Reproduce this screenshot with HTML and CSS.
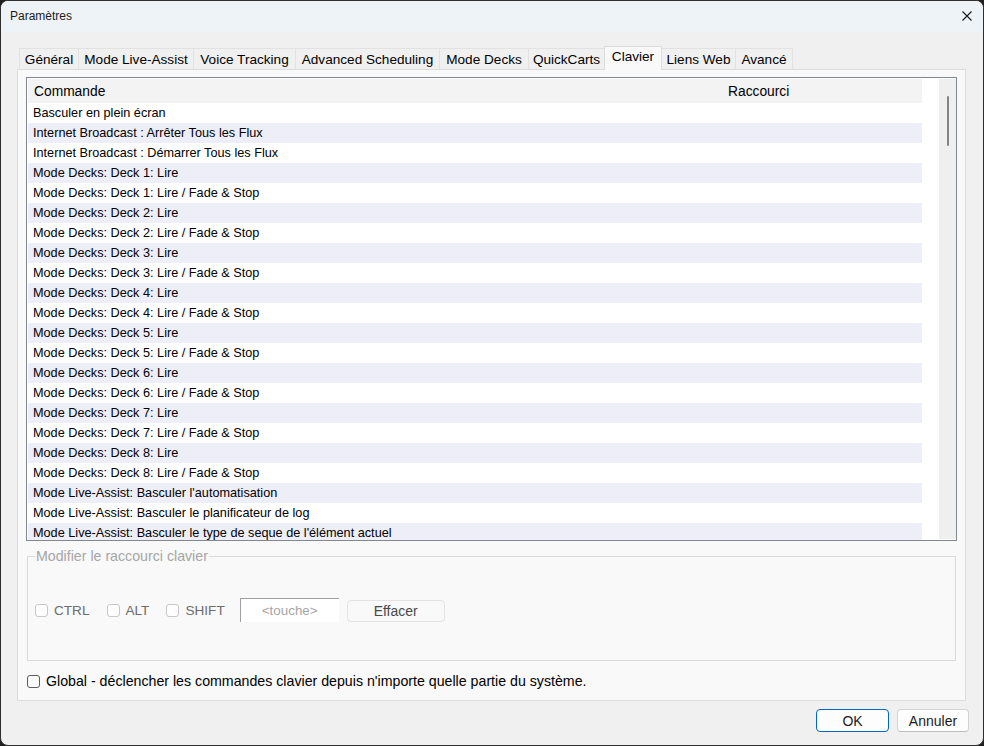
FILE: index.html
```html
<!DOCTYPE html>
<html lang="fr">

<head>
    <meta charset="UTF-8">
    <meta name="viewport" content="width=device-width, initial-scale=1.0">
    <title>Paramètres</title>
    <link rel="stylesheet" href="styles.css">
</head>

<body>
    <div class="window">
        <header class="titlebar">
            <span class="title">Paramètres</span>
            <svg class="close" width="10" height="10" viewBox="0 0 10 10">
                <path d="M0.5 0.5 L9.5 9.5 M9.5 0.5 L0.5 9.5" stroke="#1a1a1a" stroke-width="1.1" fill="none" />
            </svg>
        </header>

        <main class="content">
            <nav class="tabs">
                <div class="tab">Général</div>
                <div class="tab">Mode Live-Assist</div>
                <div class="tab">Voice Tracking</div>
                <div class="tab">Advanced Scheduling</div>
                <div class="tab">Mode Decks</div>
                <div class="tab">QuickCarts</div>
                <div class="tab active">Clavier</div>
                <div class="tab">Liens Web</div>
                <div class="tab">Avancé</div>
            </nav>

            <section class="panel">
                <div class="listbox">
                    <div class="list">
                        <div class="list-head">
                            <span class="col-cmd">Commande</span>
                            <span>Raccourci</span>
                        </div>
                        <div class="rows">
                            <div class="row">Basculer en plein écran</div>
                            <div class="row">Internet Broadcast : Arrêter Tous les Flux</div>
                            <div class="row">Internet Broadcast : Démarrer Tous les Flux</div>
                            <div class="row">Mode Decks: Deck 1: Lire</div>
                            <div class="row">Mode Decks: Deck 1: Lire / Fade &amp; Stop</div>
                            <div class="row">Mode Decks: Deck 2: Lire</div>
                            <div class="row">Mode Decks: Deck 2: Lire / Fade &amp; Stop</div>
                            <div class="row">Mode Decks: Deck 3: Lire</div>
                            <div class="row">Mode Decks: Deck 3: Lire / Fade &amp; Stop</div>
                            <div class="row">Mode Decks: Deck 4: Lire</div>
                            <div class="row">Mode Decks: Deck 4: Lire / Fade &amp; Stop</div>
                            <div class="row">Mode Decks: Deck 5: Lire</div>
                            <div class="row">Mode Decks: Deck 5: Lire / Fade &amp; Stop</div>
                            <div class="row">Mode Decks: Deck 6: Lire</div>
                            <div class="row">Mode Decks: Deck 6: Lire / Fade &amp; Stop</div>
                            <div class="row">Mode Decks: Deck 7: Lire</div>
                            <div class="row">Mode Decks: Deck 7: Lire / Fade &amp; Stop</div>
                            <div class="row">Mode Decks: Deck 8: Lire</div>
                            <div class="row">Mode Decks: Deck 8: Lire / Fade &amp; Stop</div>
                            <div class="row">Mode Live-Assist: Basculer l'automatisation</div>
                            <div class="row">Mode Live-Assist: Basculer le planificateur de log</div>
                            <div class="row">Mode Live-Assist: Basculer le type de seque de l'élément actuel</div>
                        </div>
                    </div>
                    <div class="scrollbar">
                        <div class="thumb"></div>
                    </div>
                </div>

                <fieldset class="shortcut">
                    <legend>Modifier le raccourci clavier</legend>
                    <div class="shortcut-row">
                        <span class="check"><span class="box"></span>CTRL</span>
                        <span class="check"><span class="box"></span>ALT</span>
                        <span class="check"><span class="box"></span>SHIFT</span>
                        <div class="key-input">&lt;touche&gt;</div>
                        <div class="btn-clear">Effacer</div>
                    </div>
                </fieldset>

                <div class="global">
                    <span class="box"></span>
                    Global - déclencher les commandes clavier depuis n'importe quelle partie du système.
                </div>
            </section>

            <footer class="footer">
                <button class="btn primary">OK</button>
                <button class="btn">Annuler</button>
            </footer>
        </main>
    </div>
</body>

</html>
```

FILE: styles.css
```css
:root {
    --frame: #2e2e2e;
    --title-bg: #eef3f8;
    --body-bg: #f0f0f0;
    --panel-bg: #f9f9f9;
    --tab-border: #e2e2e2;
    --row-alt: #eeeef8;
    --head-bg: #f3f3f3;
    --disabled: #a6a6a6;
    --accent: #0067c0;
}

* {
    box-sizing: border-box;
    margin: 0;
    padding: 0;
}

body {
    width: 984px;
    height: 746px;
    background-color: #1f1f1f;
    font-family: 'Liberation Sans', Arial, sans-serif;
    font-size: 14px;
    color: #000;
    overflow: hidden;
}

.window {
    width: 984px;
    height: 746px;
    border: 1px solid var(--frame);
    border-radius: 8px;
    background-color: var(--body-bg);
    overflow: hidden;
    display: flex;
    flex-direction: column;
}

.titlebar {
    height: 31px;
    flex: none;
    display: flex;
    align-items: center;
    justify-content: space-between;
    padding: 0 11px 1px 9px;
    background-color: var(--title-bg);
}

.titlebar .title {
    font-size: 12px;
    color: #1b1b1b;
}

.content {
    flex: 1 1 0%;
    padding: 14px 17px 0 16px;
}

/* tabs */

.tabs {
    display: flex;
    align-items: flex-end;
    height: 23px;
    padding-left: 3px;
}

.tab {
    height: 21px;
    line-height: 21px;
    font-size: 13.6px;
    text-align: center;
    border: 1px solid var(--tab-border);
    border-bottom: none;
    margin-left: -1px;
    background-color: var(--body-bg);
    white-space: nowrap;
}

.tab:nth-child(1) { width: 60px; }
.tab:nth-child(2) { width: 116px; }
.tab:nth-child(3) { width: 103px; }
.tab:nth-child(4) { width: 145px; }
.tab:nth-child(5) { width: 90px; }
.tab:nth-child(6) { width: 77px; }
.tab:nth-child(7) { width: 58px; }
.tab:nth-child(8) { width: 75px; }
.tab:nth-child(9) { width: 58px; }

.tab.active {
    position: relative;
    z-index: 1;
    height: 24px;
    line-height: 19px;
    margin-bottom: -1px;
    background-color: var(--panel-bg);
    border-color: #dcdcdc;
}

/* panel */

.panel {
    height: 632px;
    border: 1px solid #dcdcdc;
    background-color: var(--panel-bg);
    padding: 7px 8px 0 8px;
}

.listbox {
    display: flex;
    width: 931px;
    height: 464px;
    border: 1px solid #828790;
    background-color: #fff;
    padding: 1px 0 1px 1px;
    overflow: hidden;
}

.list {
    width: 894px;
    font-size: 12.7px;
}

.list-head {
    display: flex;
    height: 24px;
    line-height: 25px;
    font-size: 13.8px;
    background-color: var(--head-bg);
}

.list-head .col-cmd {
    width: 700px;
    padding-left: 6px;
}

.row {
    height: 20px;
    line-height: 20px;
    padding-left: 5px;
    white-space: nowrap;
}

.row:nth-child(even) {
    background-color: var(--row-alt);
}

.scrollbar {
    width: 17px;
    margin-left: auto;
    background-color: #efefef;
    padding-top: 17px;
    display: flex;
    justify-content: center;
}

.thumb {
    width: 2px;
    height: 50px;
    border-radius: 1px;
    background-color: #858585;
}

/* shortcut group */

.shortcut {
    width: 929px;
    height: 113px;
    margin: 7px 0 0 1px;
    border: 1px solid #dadada;
    padding: 34px 7px 0 7px;
}

.shortcut legend {
    margin-left: 0;
    padding: 0 1px;
    color: var(--disabled);
    font-size: 14.2px;
    line-height: 16px;
}

.shortcut-row {
    display: flex;
    align-items: center;
    height: 24px;
    color: #6d6d6d;
    font-size: 13.6px;
}

.check {
    display: flex;
    align-items: center;
    gap: 6px;
    margin-right: 17px;
}

.check:nth-child(3) {
    margin-right: 15px;
}

.box {
    width: 13px;
    height: 13px;
    flex: none;
    border: 1px solid #c8c8c8;
    border-radius: 3px;
    background-color: #fdfdfd;
}

.key-input {
    width: 99px;
    height: 24px;
    line-height: 23px;
    text-align: center;
    background-color: #fff;
    border-top: 1px solid #a0a0a0;
    border-left: 1px solid #a0a0a0;
    color: #a6a6a6;
    font-size: 13.4px;
}

.btn-clear {
    width: 98px;
    height: 22px;
    line-height: 21px;
    margin: 2px 0 0 8px;
    text-align: center;
    border: 1px solid #e3e3e3;
    border-radius: 4px;
    color: #484848;
    font-size: 14px;
}

.global {
    display: flex;
    align-items: center;
    gap: 6px;
    height: 16px;
    margin: 12px 0 0 1px;
    font-size: 14.2px;
}

.global .box {
    border-color: #5c5c5c;
    background-color: #fbfbfb;
}

/* footer */

.footer {
    display: flex;
    justify-content: flex-end;
    gap: 8px;
    padding: 8px 0 0 0;
    margin-right: -3px;
}

.btn {
    width: 72px;
    height: 23px;
    font-family: inherit;
    font-size: 14px;
    color: #1b1b1b;
    background-color: #fdfdfd;
    border: 1px solid #d3d3d3;
    border-bottom-color: #bdbdbd;
    border-radius: 4px;
}

.btn.primary {
    width: 73px;
    border: 1px solid var(--accent);
}
```
